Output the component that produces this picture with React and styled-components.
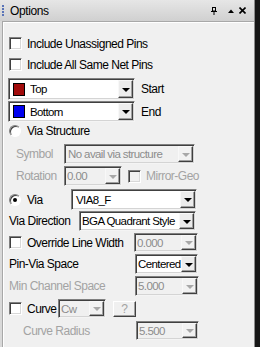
import React from "react";
import styled, { createGlobalStyle } from "styled-components";

const Global = createGlobalStyle`
  html, body { margin: 0; padding: 0; background: #111; }
  body { font-family: "Liberation Sans", Arial, sans-serif; }
`;

const Frame = styled.div`
  width: 260px;
  height: 347px;
  display: flex;
  background: #161616;
  overflow: hidden;
`;

const Panel = styled.div`
  width: 254px;
  height: 347px;
  background: #d9d9d9;
  border-right: 1px solid #8c8c8c;
  display: flex;
  flex-direction: column;
`;

const TitleBar = styled.div`
  height: 21px;
  display: flex;
  align-items: center;
  background: linear-gradient(#e6e6e6, #d0d0d0);
  padding-left: 2px;
  padding-right: 8px;
  box-sizing: border-box;
`;

const Grip = styled.div`
  width: 2px;
  height: 12px;
  margin-right: 6px;
  background: repeating-linear-gradient(#5a74b8 0 2px, transparent 2px 3px);
`;

const Title = styled.span`
  font-size: 12px;
  letter-spacing: -0.4px;
  color: #000;
  flex: 1;
`;

const TitleIcons = styled.div`
  display: flex;
  align-items: center;
  gap: ${(p) => p.$gap}px;
`;

const Body = styled.div`
  flex: 1;
  margin-left: 2px;
  background: #f0f0f0;
  border-top: 1px solid #a8a8a8;
  border-left: 1px solid #a8a8a8;
  box-shadow: inset 1px 1px #ffffff;
  padding-top: 11px;
  display: flex;
  flex-direction: column;
`;

const Row = styled.div`
  display: flex;
  align-items: center;
  height: ${(p) => p.$h}px;
  margin-top: ${(p) => p.$mt || 0}px;
  padding-left: ${(p) => p.$pl ?? 6}px;
`;

const Text = styled.span`
  font-size: 12px;
  letter-spacing: -0.5px;
  white-space: nowrap;
  color: ${(p) => (p.$dis ? "#a3a3a3" : "#000")};
  width: ${(p) => (p.$w ? `${p.$w}px` : "auto")};
  flex: none;
  margin-left: ${(p) => p.$ml || 0}px;
`;

const Check = styled.span`
  width: 13px;
  height: 13px;
  box-sizing: border-box;
  flex: none;
  background: ${(p) => (p.$dis ? "#f0f0f0" : "#fff")};
  border: 1px solid;
  border-color: #808080 #ffffff #ffffff #808080;
  box-shadow: inset 1px 1px #404040, inset -1px -1px #d8d8d8;
  margin-left: ${(p) => p.$ml || 0}px;
`;

const Radio = styled.span`
  width: 12px;
  height: 12px;
  flex: none;
  border-radius: 50%;
  box-sizing: border-box;
  background: #fff;
  border: 1px solid;
  border-color: #808080 #ffffff #ffffff #808080;
  box-shadow: inset 1px 1px #404040;
  display: flex;
  align-items: center;
  justify-content: center;
  &::after {
    content: "";
    width: 4px;
    height: 4px;
    border-radius: 50%;
    background: ${(p) => (p.$on ? "#000" : "transparent")};
  }
`;

const ComboBox = styled.div`
  width: ${(p) => p.$w}px;
  height: ${(p) => p.$h}px;
  flex: none;
  box-sizing: border-box;
  display: flex;
  align-items: stretch;
  background: ${(p) => (p.$dis ? "#f0f0f0" : "#fff")};
  border: 1px solid;
  border-color: #808080 #f4f4f4 #f4f4f4 #808080;
  box-shadow: inset 1px 1px #404040, inset -1px -1px #d4d4d4;
  padding: 1px;
  margin-left: ${(p) => p.$ml || 0}px;
`;

const ComboValue = styled.div`
  flex: 1;
  min-width: 0;
  display: flex;
  align-items: center;
  padding-left: ${(p) => p.$pl ?? 2}px;
  font-size: 11.5px;
  letter-spacing: -0.6px;
  white-space: nowrap;
  overflow: hidden;
  color: ${(p) => (p.$dis ? "#8c8c8c" : "#000")};
`;

const Swatch = styled.span`
  width: 12px;
  height: 13px;
  box-sizing: border-box;
  border: 1px solid #000;
  background: ${(p) => p.$c};
  margin-right: 5px;
  flex: none;
`;

const DropBtn = styled.div`
  width: 15px;
  flex: none;
  box-sizing: border-box;
  background: ${(p) => (p.$dis ? "#f2f2f2" : "#ececec")};
  border: 1px solid;
  border-color: #f8f8f8 #404040 #404040 #f8f8f8;
  box-shadow: inset -1px -1px #a0a0a0;
  display: flex;
  align-items: center;
  justify-content: center;
  &::after {
    content: "";
    border-left: 4px solid transparent;
    border-right: 4px solid transparent;
    border-top: 4px solid ${(p) => (p.$dis ? "#a8a8a8" : "#000")};
    margin-top: 1px;
  }
`;

const Button = styled.div`
  width: 23px;
  height: 16px;
  box-sizing: border-box;
  flex: none;
  margin-left: ${(p) => p.$ml || 0}px;
  background: #f0f0f0;
  border: 1px solid;
  border-color: #ffffff #404040 #404040 #ffffff;
  box-shadow: inset -1px -1px #a0a0a0;
  display: flex;
  align-items: center;
  justify-content: center;
  font-size: 12px;
  color: #a3a3a3;
`;

function Combo({ w, h, dis, value, swatch, ml, pl }) {
  return (
    <ComboBox $w={w} $h={h} $dis={dis} $ml={ml}>
      <ComboValue $dis={dis} $pl={pl}>
        {swatch && <Swatch $c={swatch} />}
        {value}
      </ComboValue>
      <DropBtn $dis={dis} />
    </ComboBox>
  );
}

const PinIcon = () => (
  <svg width="6" height="8" viewBox="0 0 6 8">
    <rect x="1.5" y="0.5" width="3" height="3.5" fill="none" stroke="#000" />
    <line x1="0" y1="4.5" x2="6" y2="4.5" stroke="#000" />
    <line x1="3" y1="5" x2="3" y2="8" stroke="#000" />
  </svg>
);

const UpIcon = () => (
  <svg width="6" height="4" viewBox="0 0 6 4">
    <polygon points="0,4 6,4 3,0.5" fill="#000" />
  </svg>
);

const CloseIcon = () => (
  <svg width="7" height="7" viewBox="0 0 7 7">
    <path d="M0.5 0.5 L6.5 6.5 M6.5 0.5 L0.5 6.5" stroke="#000" strokeWidth="1.6" />
  </svg>
);

export default function App() {
  return (
    <>
      <Global />
      <Frame>
        <Panel>
          <TitleBar>
            <Grip />
            <Title>Options</Title>
            <TitleIcons $gap={11}>
              <PinIcon />
              <TitleIcons $gap={5}>
                <UpIcon />
                <CloseIcon />
              </TitleIcons>
            </TitleIcons>
          </TitleBar>
          <Body>
            <Row $h={21}>
              <Check />
              <Text $ml={5}>Include Unassigned Pins</Text>
            </Row>
            <Row $h={21}>
              <Check />
              <Text $ml={5}>Include All Same Net Pins</Text>
            </Row>
            <Row $h={22} $mt={3} $pl={5}>
              <Combo w={127} h={22} value="Top" swatch="#a10b0b" pl={3} />
              <Text $ml={6}>Start</Text>
            </Row>
            <Row $h={21} $mt={1} $pl={5}>
              <Combo w={127} h={21} value="Bottom" swatch="#0000f0" pl={3} />
              <Text $ml={6}>End</Text>
            </Row>
            <Row $h={18}>
              <Radio />
              <Text $ml={6}>Via Structure</Text>
            </Row>
            <Row $h={20} $mt={4} $pl={13}>
              <Text $dis $w={48}>Symbol</Text>
              <Combo w={131} h={20} dis value="No avail via structure" />
            </Row>
            <Row $h={20} $mt={2} $pl={13}>
              <Text $dis $w={48}>Rotation</Text>
              <Combo w={58} h={20} dis value="0.00" pl={1} />
              <Check $dis $ml={6} />
              <Text $dis $ml={5}>Mirror-Geo</Text>
            </Row>
            <Row $h={21} $mt={3}>
              <Radio $on />
              <Text $ml={6} $w={44}>Via</Text>
              <Combo w={126} h={21} value="VIA8_F" pl={3} />
            </Row>
            <Row $h={20} $mt={1}>
              <Text $w={70}>Via Direction</Text>
              <Combo w={117} h={20} value="BGA Quadrant Style" pl={1} />
            </Row>
            <Row $h={19} $mt={2}>
              <Check />
              <Text $ml={5} $w={107}>Override Line Width</Text>
              <Combo w={64} h={19} dis value="0.000" pl={1} />
            </Row>
            <Row $h={20} $mt={2}>
              <Text $w={126}>Pin-Via Space</Text>
              <Combo w={63} h={20} value="Centered" pl={1} />
            </Row>
            <Row $h={20} $mt={2}>
              <Text $dis $w={126}>Min Channel Space</Text>
              <Combo w={64} h={20} dis value="5.000" pl={1} />
            </Row>
            <Row $h={19} $mt={3}>
              <Check />
              <Text $ml={5} $w={31}>Curve</Text>
              <Combo w={48} h={19} dis value="Cw" pl={1} />
              <Button $ml={7}>?</Button>
            </Row>
            <Row $h={19} $mt={3} $pl={20}>
              <Text $dis $w={113}>Curve Radius</Text>
              <Combo w={63} h={19} dis value="5.500" pl={1} />
            </Row>
          </Body>
        </Panel>
      </Frame>
    </>
  );
}
